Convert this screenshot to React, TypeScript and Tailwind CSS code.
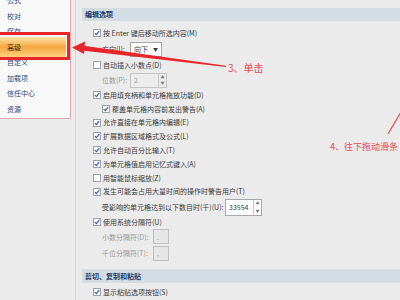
function Box({ on }: { on: boolean }) {
  return (
    <span className="w-[8px] h-[8px] shrink-0 bg-white border border-[#9aa3ad] flex items-center justify-center">
      {on && (
        <svg width="6" height="6" viewBox="0 0 6 6">
          <path d="M0.8 3.1 L2.4 4.6 L5.2 1.2" fill="none" stroke="#2f5fa8" strokeWidth="1.2" />
        </svg>
      )}
    </span>
  );
}

function Check({ on, label, h = "h-[13.8px]", indent = false }: { on: boolean; label: string; h?: string; indent?: boolean }) {
  return (
    <div className={`${h} flex items-center gap-[2px] ${indent ? "pl-[26px]" : "pl-[17px]"}`}>
      <Box on={on} />
      <span className="whitespace-nowrap">{label}</span>
    </div>
  );
}

function Spin() {
  return (
    <span className="w-[8px] h-full flex flex-col border-l border-[#c8c8c8]">
      <span className="flex-1 flex items-center justify-center text-[4px] text-[#7a7a7a] leading-none">▲</span>
      <span className="flex-1 flex items-center justify-center text-[4px] text-[#7a7a7a] leading-none">▼</span>
    </span>
  );
}

export default function App() {
  const side = ["公式", "校对", "保存", "高级", "自定义", "加载项", "信任中心", "资源"];
  return (
    <div
      className="relative w-[400px] h-[300px] overflow-hidden bg-[#ebebeb] flex text-[7px] text-[#3a3a3a]"
      style={{ fontFamily: '"Noto Sans CJK SC", "Noto Sans", sans-serif' }}
    >
      <div className="w-[71px] shrink-0">
        <div className="h-[127px] bg-[#f9f9f9] border-r border-b border-[#dcaaaa] -mt-[8px] pt-[0.5px]">
          {side.map((s) =>
            s === "高级" ? (
              <div key={s} className="h-[20px] -my-[2.25px] mr-[4px] flex items-center pl-[7px] text-[#3a2a10] bg-gradient-to-b from-[#fde6a6] via-[#f5a73d] to-[#fbd27c]">
                {s}
              </div>
            ) : (
              <div key={s} className="h-[15.5px] flex items-center pl-[7px] text-[#2b4a80]">
                {s}
              </div>
            )
          )}
        </div>
      </div>
      <div className="w-[5px] shrink-0 border-r border-[#d6d6d6]" />
      <div className="flex-1 pt-[8px]">
        <div className="ml-[6px] h-[13px] bg-[#d3dbe3] flex items-center pl-[3px] font-bold text-[#1f3a68]">编辑选项</div>
        <div className="mt-[5px]">
          <Check on label="按 Enter 键后移动所选内容(M)" h="h-[14px]" />
          <div className="h-[18px] flex items-center pl-[26px]">
            <span className="w-[28px]">方向(I):</span>
            <span className="w-[32px] h-[15px] bg-white border border-[#a8a8a8] flex items-center justify-between px-[3px]">
              <span>向下</span>
              <span className="text-[5px]">▼</span>
            </span>
          </div>
          <Check on={false} label="自动插入小数点(D)" h="h-[14px]" />
          <div className="h-[16px] flex items-center pl-[26px] text-[#9a9a9a]">
            <span className="w-[28px]">位数(P):</span>
            <span className="w-[37px] h-[15px] bg-[#ececec] border border-[#c4c4c4] flex items-center justify-between pl-[3px]">
              <span>2</span>
              <Spin />
            </span>
          </div>
          <Check on label="启用填充柄和单元格拖放功能(D)" h="h-[14px]" />
          <Check on indent label="覆盖单元格内容前发出警告(A)" />
          <Check on label="允许直接在单元格内编辑(E)" />
          <Check on label="扩展数据区域格式及公式(L)" />
          <Check on label="允许自动百分比输入(T)" />
          <Check on label="为单元格值启用记忆式键入(A)" />
          <Check on={false} label="用智能鼠标缩放(Z)" />
          <Check on label="发生可能会占用大量时间的操作时警告用户(T)" />
          <div className="h-[17px] flex items-center pl-[26px]">
            <span className="w-[123px] whitespace-nowrap">受影响的单元格达到以下数目时(千)(U):</span>
            <span className="w-[37px] h-[17px] bg-white border border-[#a8a8a8] flex items-center justify-between pl-[3px]">
              <span>33554</span>
              <Spin />
            </span>
          </div>
          <Check on label="使用系统分隔符(U)" h="h-[13px]" />
          <div className="h-[16.5px] flex items-center pl-[26px] text-[#9a9a9a]">
            <span className="w-[51px] whitespace-nowrap">小数分隔符(D):</span>
            <span className="w-[16px] h-[15px] bg-[#e6e6e6] border border-[#c0c0c0] pl-[3px] flex items-center">.</span>
          </div>
          <div className="h-[17px] flex items-center pl-[26px] text-[#9a9a9a]">
            <span className="w-[51px] whitespace-nowrap">千位分隔符(T):</span>
            <span className="w-[16px] h-[15px] bg-[#e6e6e6] border border-[#c0c0c0] pl-[3px] flex items-center">,</span>
          </div>
        </div>
        <div className="mt-[7px] ml-[6px] h-[14px] bg-[#d3dbe3] flex items-center pl-[3px] font-bold text-[#1f3a68]">剪切、复制和粘贴</div>
        <div className="mt-[2px]">
          <Check on label="显示粘贴选项按钮(S)" h="h-[14px]" />
        </div>
      </div>

      <div className="absolute left-[-3px] top-[32px] w-[73px] h-[28px] border-[3px] border-[#e8252b]" />
      <svg className="absolute inset-0 pointer-events-none" width="400" height="300" viewBox="0 0 400 300">
        <polygon points="72,47.5 85,41.5 84,54" fill="#e8252b" />
        <polygon points="82,45.5 82,50.5 226,67 226,65.8" fill="#e8252b" />
        <line x1="388" y1="134" x2="401" y2="112" stroke="#e8454a" strokeWidth="1.2" />
      </svg>
      <div className="absolute left-[228px] top-[60px] text-[10px] text-[#ea4a4e] whitespace-nowrap">3、单击</div>
      <div className="absolute left-[330px] top-[140px] text-[9px] text-[#ea4a4e] whitespace-nowrap">4、往下拖动滑条</div>
    </div>
  );
}
